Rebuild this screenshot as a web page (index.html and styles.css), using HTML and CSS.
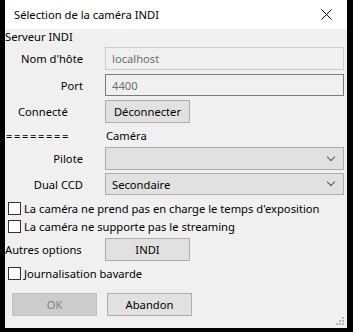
FILE: index.html
```html
<!DOCTYPE html>
<html lang="fr">
<head>
  <meta charset="UTF-8" />
  <title>Sélection de la caméra INDI</title>
  <link rel="stylesheet" href="styles.css">
</head>
<body>
  <div class="window">
    <div class="titlebar">
      <span class="title">Sélection de la caméra INDI</span>
      <svg class="close" width="11" height="11" viewBox="0 0 11 11">
        <path d="M0.5 0.5 L10.5 10.5 M10.5 0.5 L0.5 10.5" stroke="#000" stroke-width="1" fill="none"/>
      </svg>
    </div>

    <div class="content">
      <div class="group-title">Serveur INDI</div>

      <div class="form-row r-host">
        <label class="lbl">Nom d'hôte</label>
        <div class="field line disabled">localhost</div>
      </div>
      <div class="form-row r-port">
        <label class="lbl">Port</label>
        <div class="field line">4400</div>
      </div>
      <div class="form-row r-conn">
        <label class="lbl left">Connecté</label>
        <button class="btn">Déconnecter</button>
      </div>

      <div class="form-row r-sep">
        <span class="lbl left flush eq">========</span>
        <span class="sep-title">Caméra</span>
      </div>

      <div class="form-row r-pilote">
        <label class="lbl">Pilote</label>
        <div class="field combo"><span></span><i class="arrow"></i></div>
      </div>
      <div class="form-row r-dual">
        <label class="lbl">Dual CCD</label>
        <div class="field combo"><span>Secondaire</span><i class="arrow"></i></div>
      </div>

      <div class="check r-chk1"><span class="box"></span>La caméra ne prend pas en charge le temps d'exposition</div>
      <div class="check r-chk2"><span class="box"></span>La caméra ne supporte pas le streaming</div>

      <div class="form-row r-opts">
        <span class="lbl left flush">Autres options</span>
        <button class="btn">INDI</button>
      </div>

      <div class="check r-chk3"><span class="box"></span>Journalisation bavarde</div>

      <div class="actions">
        <button class="btn disabled">OK</button>
        <button class="btn">Abandon</button>
      </div>

      <div class="grip">
        <svg width="8" height="8" viewBox="0 0 8 8">
          <rect x="6" y="0" width="2" height="2" fill="#b5b5b5"/>
          <rect x="3" y="3" width="2" height="2" fill="#b5b5b5"/>
          <rect x="6" y="3" width="2" height="2" fill="#b5b5b5"/>
          <rect x="0" y="6" width="2" height="2" fill="#b5b5b5"/>
          <rect x="3" y="6" width="2" height="2" fill="#b5b5b5"/>
          <rect x="6" y="6" width="2" height="2" fill="#b5b5b5"/>
        </svg>
      </div>
    </div>
  </div>
</body>
</html>
```

FILE: styles.css
```css
* {
  box-sizing: border-box;
  margin: 0;
  padding: 0;
}

body {
  background: #000;
  font-family: 'Noto Sans', sans-serif;
  font-size: 11.2px;
  color: #000;
  width: 353px;
  height: 332px;
  overflow: hidden;
}

.window {
  margin-left: 5px;
  width: 342px;
  height: 328px;
  display: flex;
  flex-direction: column;
}

.titlebar {
  height: 29px;
  background: #fff;
  display: flex;
  align-items: center;
  justify-content: space-between;
  padding: 0 15px 0 9px;
}

.title {
  font-size: 11.2px;
  padding-bottom: 1px;
}

.close {
  display: block;
  margin-top: -1px;
}

.content {
  flex: 1;
  background: #f0f0f0;
  display: flex;
  flex-direction: column;
  position: relative;
}

.group-title {
  height: 16px;
  line-height: 16px;
}

.form-row {
  display: flex;
  align-items: center;
  white-space: nowrap;
}

.lbl {
  width: 78px;
  text-align: right;
  margin-right: 22px;
  flex: none;
}

.lbl.left {
  text-align: left;
  padding-left: 13px;
}

.lbl.flush {
  padding-left: 0;
}

.eq {
  letter-spacing: 1.6px;
  padding-left: 1px !important;
}

.field {
  width: 239px;
  height: 23px;
  display: flex;
  align-items: center;
  padding: 0 6px;
}

.line {
  border: 1px solid #7a7a7a;
  color: #6d6d6d;
}

.line.disabled {
  border-color: #cccccc;
}

.combo {
  background: #e1e1e1;
  border: 1px solid #adadad;
  justify-content: space-between;
  padding-right: 9px;
}

.arrow {
  width: 6px;
  height: 6px;
  border-right: 1px solid #555;
  border-bottom: 1px solid #555;
  transform: rotate(45deg);
  margin-top: -4px;
}

.btn {
  font: inherit;
  width: 85px;
  height: 23px;
  background: #e1e1e1;
  border: 1px solid #adadad;
  color: #000;
}

.btn.disabled {
  background: #cccccc;
  border-color: #bfbfbf;
  color: #838383;
}

.r-host { margin-top: 2px; }
.r-port { margin-top: 4px; }
.r-port .field { height: 22px; }
.r-conn { margin-top: 4px; }
.r-sep { margin-top: 3px; height: 18px; }
.r-pilote { margin-top: 3px; }
.r-dual { margin-top: 3px; }
.r-dual .field { height: 22px; }

.sep-title {
  padding-left: 1px;
}

.check {
  display: flex;
  align-items: center;
  height: 18px;
  white-space: nowrap;
}

.box {
  width: 13px;
  height: 13px;
  background: #fff;
  border: 1px solid #333;
  margin: 0 3px 0 3px;
  flex: none;
}

.r-chk1 { margin-top: 4px; }
.r-opts { margin-top: 3px; }
.r-chk3 { margin-top: 3px; }

.actions {
  display: flex;
  gap: 10px;
  margin: 11px 0 0 7px;
}

.grip {
  position: absolute;
  right: 3px;
  bottom: 3px;
  line-height: 0;
}
```
